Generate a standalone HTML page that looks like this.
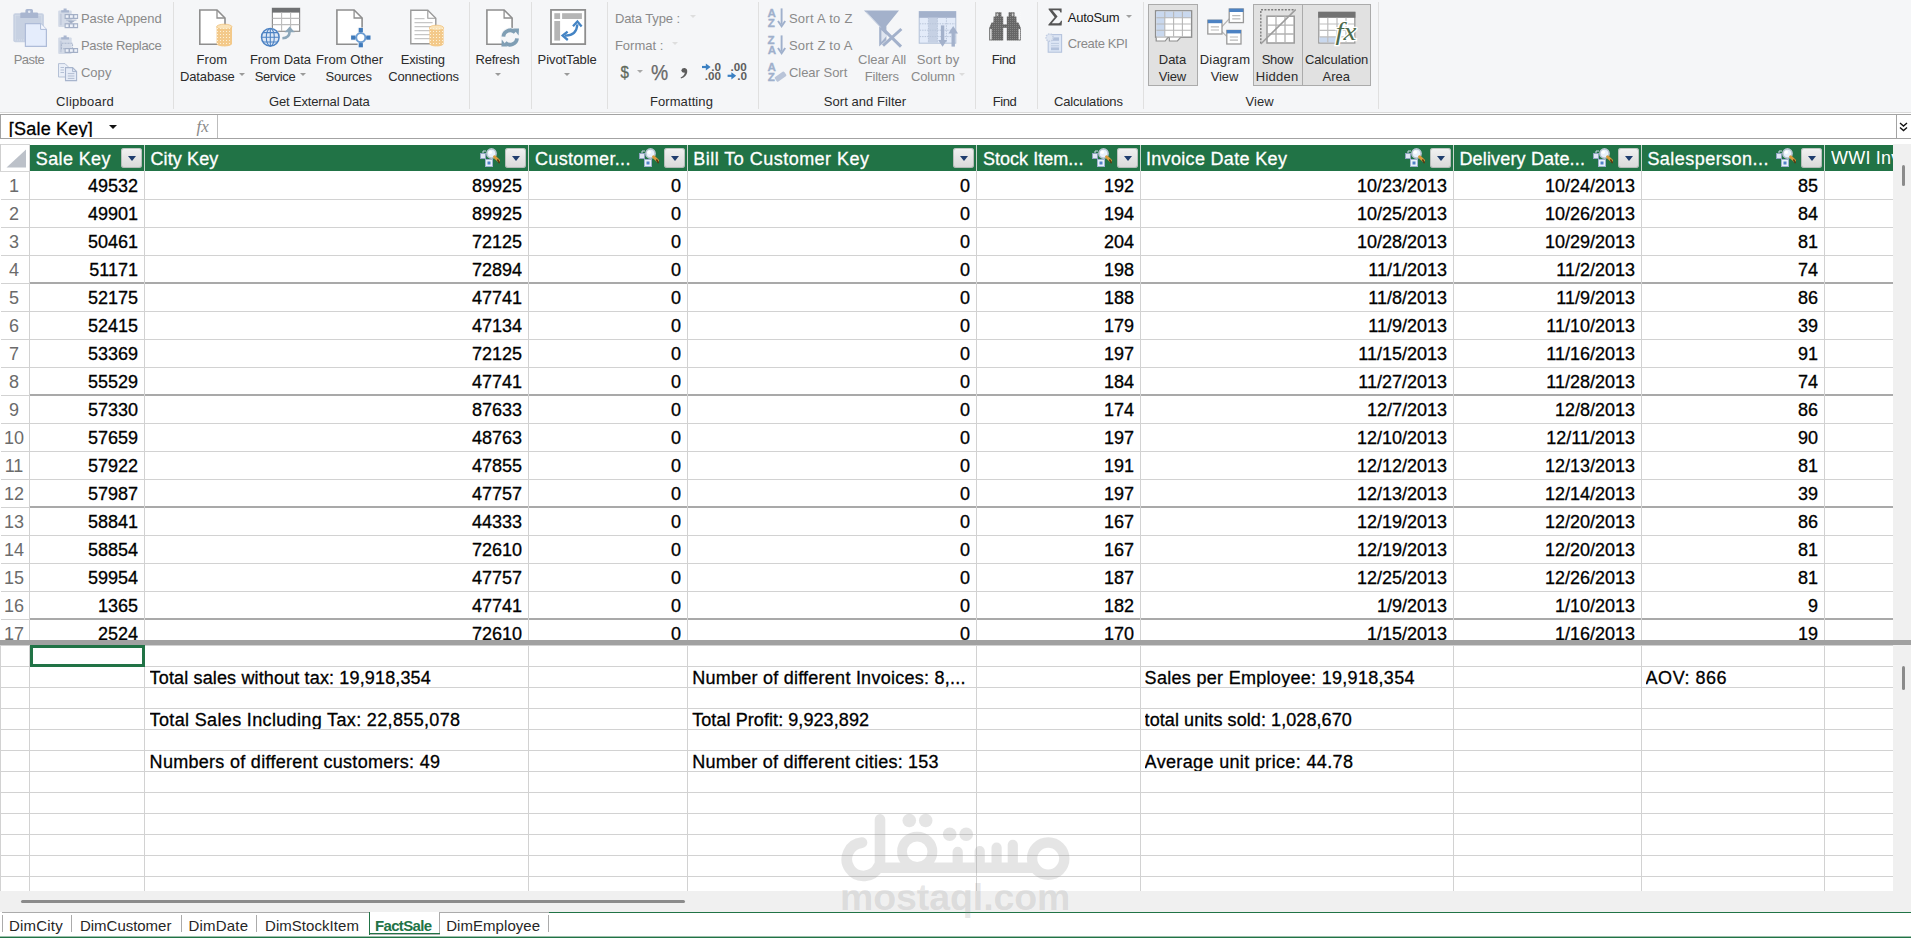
<!DOCTYPE html>
<html><head><meta charset="utf-8"><title>Power Pivot for Excel</title>
<style>
html,body{margin:0;padding:0}
body{width:1911px;height:938px;overflow:hidden;position:relative;background:#fff;font-family:'Liberation Sans', sans-serif}
.a{position:absolute}
.t{position:absolute;white-space:pre;display:block}
.sep{position:absolute;top:2px;width:1px;height:107px;background:#e0e0e0}
.vl{position:absolute;width:1px;background:#d2d2d2}
.hl{position:absolute;height:1px;background:#d2d2d2}
.num{position:absolute;-webkit-text-stroke:.3px #000;font-size:18px;line-height:28px;height:27px;overflow:hidden;text-align:right;color:#000;white-space:pre}
.rn{position:absolute;left:0;width:28px;font-size:18px;line-height:28px;height:27px;overflow:hidden;text-align:center;color:#6b6b6b}
.fb{position:absolute;width:21px;height:20px;border-radius:3px;background:linear-gradient(#f2f2f2,#e6e6e6 45%,#d9d9d9);box-shadow:inset 0 0 0 1px rgba(150,160,155,.55)}
.fb:after{content:"";position:absolute;left:6.5px;top:8px;border-left:4px solid transparent;border-right:4px solid transparent;border-top:5px solid #1f3d6e}
.arr{position:absolute;width:0;height:0;border-left:3px solid transparent;border-right:3px solid transparent;border-top:3px solid #a8a8a8}
.btn{position:absolute;top:4px;height:82px;background:#e1e1e1;border:1px solid #ababab;box-sizing:border-box}
</style></head><body>
<div class="a" style="left:0;top:0;width:1911px;height:112px;background:#f5f6f8"></div><div class="a" style="left:0;top:112px;width:1911px;height:1px;background:#dadada"></div><div class="sep" style="left:173px"></div><div class="sep" style="left:469px"></div><div class="sep" style="left:531px"></div><div class="sep" style="left:607px"></div><div class="sep" style="left:758px"></div><div class="sep" style="left:975px"></div><div class="sep" style="left:1037px"></div><div class="sep" style="left:1143px"></div><div class="sep" style="left:1378px"></div><div class="btn" style="left:1148px;width:50px"></div><div class="btn" style="left:1253px;width:50px"></div><div class="btn" style="left:1302px;width:69px"></div>
<div class="arr" style="left:239.2px;top:72.8px;border-top-color:#9a9a9a"></div><div class="arr" style="left:300.0px;top:72.8px;border-top-color:#9a9a9a"></div><div class="arr" style="left:495.2px;top:72.8px;border-top-color:#9a9a9a"></div><div class="arr" style="left:563.8px;top:72.8px;border-top-color:#9a9a9a"></div><div class="arr" style="left:689.5px;top:15.0px;border-top-color:#dedede"></div><div class="arr" style="left:672.0px;top:41.8px;border-top-color:#dedede"></div><div class="arr" style="left:637.0px;top:69.8px;border-top-color:#a8a8a8"></div><div class="arr" style="left:959.4px;top:72.8px;border-top-color:#dcdcdc"></div><div class="arr" style="left:1126.3px;top:15.0px;border-top-color:#a0a0a0"></div><svg class="a" style="left:0;top:0" width="1400" height="112" viewBox="0 0 1400 112">
<defs>
<pattern id="dots" width="3" height="3" patternUnits="userSpaceOnUse"><rect x="1" y="1" width="1" height="1" fill="#fdf1d8"/></pattern>
<pattern id="dotsb" width="2" height="2" patternUnits="userSpaceOnUse"><rect x="0" y="0" width="1" height="1" fill="#fff" opacity=".55"/></pattern>
</defs>
<rect x="13.3" y="13.3" width="30.6" height="29" rx="2" fill="#c7d1e2"/>
<rect x="15.5" y="15.5" width="26" height="24.5" fill="none" stroke="#d6deeb" stroke-width="1" stroke-dasharray="1 1"/>
<path d="M20.3 17.9 V13.6 Q20.3 12.4 21.6 12.4 H25.4 V10.6 Q25.4 9 27 9 H31.4 Q33 9 33 10.6 V12.4 H36.8 Q38.2 12.4 38.2 13.6 V17.9 Z" fill="#a9b6d0"/>
<circle cx="29.2" cy="11.8" r="1.3" fill="#e4eaf4"/>
<path d="M25.4 23.6 H40.6 L46.4 29.4 V46.4 H25.4 Z" fill="#e5edfc" stroke="#aebcd8" stroke-width="1.2"/>
<path d="M40.6 23.6 V29.4 H46.4" fill="#f4f7fe" stroke="#aebcd8" stroke-width="1"/>
<rect x="58.2" y="10.399999999999999" width="13.5" height="16.5" rx="1" fill="#d3dae7"/><path d="M61.2 12.6 V10.2 H63.6 V8.5 H66.60000000000001 V10.2 H69.0 V12.6 Z" fill="#a9b6cf"/><rect x="59.800000000000004" y="13.799999999999999" width="2" height="11.5" fill="#c2cbdc"/>
<rect x="64.6" y="14" width="13.499999999999998" height="5" fill="#a3afc6"/><rect x="65.69999999999999" y="15.2" width="2.8" height="2.6" fill="#eef2f9"/><rect x="69.99999999999999" y="15.2" width="2.8" height="2.6" fill="#eef2f9"/><rect x="74.29999999999998" y="15.2" width="2.8" height="2.6" fill="#eef2f9"/>
<path d="M67 20.4 H75.4 L71.2 23.4 Z" fill="#a3afc6"/><rect x="66" y="19.6" width="10.5" height="1" fill="#b4bfd2"/>
<rect x="64.6" y="23.2" width="13.499999999999998" height="5" fill="#a3afc6"/><rect x="65.69999999999999" y="24.4" width="2.8" height="2.6" fill="#eef2f9"/><rect x="69.99999999999999" y="24.4" width="2.8" height="2.6" fill="#eef2f9"/><rect x="74.29999999999998" y="24.4" width="2.8" height="2.6" fill="#eef2f9"/>
<rect x="58.2" y="37.400000000000006" width="13.5" height="16.5" rx="1" fill="#d3dae7"/><path d="M61.2 39.6 V37.2 H63.6 V35.5 H66.60000000000001 V37.2 H69.0 V39.6 Z" fill="#a9b6cf"/><rect x="59.800000000000004" y="40.800000000000004" width="2" height="11.5" fill="#c2cbdc"/>
<rect x="61.5" y="43.2" width="11" height="5.5" fill="none" stroke="#aab6cc" stroke-width="1.1" stroke-dasharray="2 1"/>
<rect x="64.6" y="48" width="13.499999999999998" height="5" fill="#a3afc6"/><rect x="65.69999999999999" y="49.2" width="2.8" height="2.6" fill="#eef2f9"/><rect x="69.99999999999999" y="49.2" width="2.8" height="2.6" fill="#eef2f9"/><rect x="74.29999999999998" y="49.2" width="2.8" height="2.6" fill="#eef2f9"/>
<path d="M58.5 63.6 H65 L68 66.6 V77 H58.5 Z" fill="#eaeff8" stroke="#b5c1d6" stroke-width="1"/>
<path d="M60.5 67.5 H64 M60.5 70 H64 M60.5 72.5 H64" stroke="#b5c1d6" stroke-width="1"/>
<path d="M65.5 67.6 H72.6 L76.6 71.6 V80.6 H65.5 Z" fill="#e6ecf7" stroke="#a8b5cd" stroke-width="1.1"/>
<path d="M72.6 67.6 V71.6 H76.6" fill="none" stroke="#a8b5cd" stroke-width="1"/>
<path d="M67.8 73.6 H74.4 M67.8 76 H74.4 M67.8 78.4 H74.4" stroke="#b2bdd2" stroke-width="1"/>
<path d="M199.8 10 H217.0 L225.0 18 V44.2 H199.8 Z" fill="#fff" stroke="#8e8e8e" stroke-width="1.6" stroke-linejoin="miter"/><path d="M217.0 10 V18 H225.0" fill="none" stroke="#8e8e8e" stroke-width="1.2800000000000002"/>
<path d="M216.6 26.8 V43.8 A7.7 2.6 0 0 0 232.0 43.8 V26.8 Z" fill="#f3c98a"/><ellipse cx="224.29999999999998" cy="26.8" rx="7.7" ry="2.6" fill="#fae3b9" stroke="#f0c27c" stroke-width=".8"/><path d="M216.6 26.8 V43.8 A7.7 2.6 0 0 0 232.0 43.8 V26.8" fill="url(#dots)"/>
<rect x="272.4" y="8.3" width="27.2" height="23" fill="#fff" stroke="#8e8e8e" stroke-width="1.2"/>
<rect x="272" y="8" width="28" height="4.6" fill="#6f7173"/>
<path d="M272.6 18.4 H299.4 M272.6 24.6 H299.4 M281.6 12.6 V31 M290.6 12.6 V31" stroke="#bcbcbc" stroke-width="1.1" fill="none"/>
<circle cx="270.3" cy="37.3" r="9.8" fill="#f5f6f8"/>
<circle cx="270.3" cy="37.3" r="8.8" fill="#dbe7f6" stroke="#4c82c3" stroke-width="1.5"/>
<ellipse cx="270.3" cy="37.3" rx="4" ry="8.8" fill="none" stroke="#4c82c3" stroke-width="1.1"/>
<path d="M261.6 37.3 H279 M263 32.6 H277.6 M263 42 H277.6 M270.3 28.5 V46.1" stroke="#4c82c3" stroke-width="1.1" fill="none"/>
<path d="M282.4 38.2 Q289.6 38 289.6 31.5" fill="none" stroke="#8ba6b9" stroke-width="2.6"/>
<path d="M284.6 32.2 L289.7 26.6 L294.8 32.2 Z" fill="#8ba6b9"/>
<path d="M336.9 10 H354.09999999999997 L362.09999999999997 18 V44.2 H336.9 Z" fill="#fff" stroke="#8e8e8e" stroke-width="1.6" stroke-linejoin="miter"/><path d="M354.09999999999997 10 V18 H362.09999999999997" fill="none" stroke="#8e8e8e" stroke-width="1.2800000000000002"/>
<path d="M357.6 27.6 H364 V34.4 H371 V40.8 H364 V47.8 H357.6 V40.8 H350.6 V34.4 H357.6 Z" fill="#f5f6f8"/>
<circle cx="360.8" cy="37.6" r="4.6" fill="#fff" stroke="#6c9dd2" stroke-width="2"/>
<path d="M360.8 29.5 V33 M360.8 42.2 V45.8 M352.6 37.6 H356.2 M365.4 37.6 H369" stroke="#6c9dd2" stroke-width="1.6"/>
<rect x="358.7" y="27.9" width="4.2" height="4.2" fill="#3f7abb"/>
<rect x="358.7" y="43.1" width="4.2" height="4.2" fill="#3f7abb"/>
<rect x="351.09999999999997" y="35.5" width="4.2" height="4.2" fill="#3f7abb"/>
<rect x="366.29999999999995" y="35.5" width="4.2" height="4.2" fill="#3f7abb"/>
<path d="M410.8 10.2 H427.8 L435.8 18.2 V43.8 H410.8 Z" fill="#fff" stroke="#9a9a9a" stroke-width="1.4" stroke-linejoin="miter"/><path d="M427.8 10.2 V18.2 H435.8" fill="none" stroke="#9a9a9a" stroke-width="1.1199999999999999"/>
<path d="M414.5 18.6 H424.5 M414.5 22.6 H432.6 M414.5 26.6 H432.6 M414.5 30.6 H430 M414.5 34.6 H430 M414.5 38.6 H430" stroke="#c6c6c6" stroke-width="1.1"/>
<path d="M429.4 27.8 V43.8 A7.1 2.6 0 0 0 443.59999999999997 43.8 V27.8 Z" fill="#f3c98a"/><ellipse cx="436.5" cy="27.8" rx="7.1" ry="2.6" fill="#fae3b9" stroke="#f0c27c" stroke-width=".8"/><path d="M429.4 27.8 V43.8 A7.1 2.6 0 0 0 443.59999999999997 43.8 V27.8" fill="url(#dots)"/>
<path d="M486.9 10 H504.1 L512.1 18 V44.2 H486.9 Z" fill="#fff" stroke="#8e8e8e" stroke-width="1.6" stroke-linejoin="miter"/><path d="M504.1 10 V18 H512.1" fill="none" stroke="#8e8e8e" stroke-width="1.2800000000000002"/>
<circle cx="510.2" cy="37.4" r="10" fill="#f5f6f8"/>
<path d="M503.4 36.6 A6.9 6.9 0 0 1 515.2 32.4" fill="none" stroke="#7f9eb4" stroke-width="3.8"/>
<path d="M513.2 28.6 L519 28.4 L518.6 35.4 Z" fill="#7f9eb4"/>
<path d="M517 38.4 A6.9 6.9 0 0 1 505.2 42.6" fill="none" stroke="#7f9eb4" stroke-width="3.8"/>
<path d="M507.2 46.4 L501.4 46.6 L501.8 39.6 Z" fill="#7f9eb4"/>
<rect x="551" y="9.9" width="34.2" height="34.2" fill="#fff" stroke="#8e8e8e" stroke-width="1.8"/>
<rect x="554.3" y="13.2" width="5.8" height="5.8" fill="#b5b5b5"/><rect x="562.1" y="13.2" width="19.8" height="5.8" fill="#b5b5b5"/><rect x="554.3" y="21" width="5.8" height="19.6" fill="#b5b5b5"/>
<path d="M565 35.6 Q576.4 36 577.4 24.4" fill="none" stroke="#4484c4" stroke-width="2.3"/>
<path d="M573 26.2 L577.4 21.4 L581.6 26.4" fill="none" stroke="#4484c4" stroke-width="2.3"/>
<path d="M567.6 31.6 L562.6 35.6 L567.8 40" fill="none" stroke="#4484c4" stroke-width="2.3"/>
<text x="620.6" y="78" font-size="16.5" fill="#5f6a5c" stroke="#5f6a5c" stroke-width=".3" textLength="8.4" lengthAdjust="spacingAndGlyphs">$</text>
<text x="651" y="79.8" font-size="21.5" fill="#686868" stroke="#686868" stroke-width=".25" textLength="17.2" lengthAdjust="spacingAndGlyphs">%</text>
<path d="M681.2 70.4 Q682 67.8 684.6 68 Q687.6 68.6 687.2 72.2 Q686.6 76.6 681 78.6 L680.6 77.6 Q684.6 75.6 684.8 72.6 Q682 73 681.2 70.4 Z" fill="#5d5d5d"/>
<text x="711.2" y="70.6" font-size="11.5" font-weight="bold" fill="#5d5d5d" textLength="9.8" lengthAdjust="spacingAndGlyphs">.0</text>
<text x="704.8" y="80.2" font-size="11.5" font-weight="bold" fill="#5d5d5d" textLength="16.2" lengthAdjust="spacingAndGlyphs">.00</text>
<path d="M702 67 H706.8" stroke="#3b80c2" stroke-width="2.2"/><path d="M705.8 63.4 L710.6 67 L705.8 70.6 Z" fill="#3b80c2"/>
<text x="730.6" y="70.6" font-size="11.5" font-weight="bold" fill="#5d5d5d" textLength="16.2" lengthAdjust="spacingAndGlyphs">.00</text>
<text x="737.2" y="80.2" font-size="11.5" font-weight="bold" fill="#5d5d5d" textLength="9.8" lengthAdjust="spacingAndGlyphs">.0</text>
<path d="M727.6 75.8 H732.4" stroke="#3b80c2" stroke-width="2.2"/><path d="M731.4 72.2 L736.2 75.8 L731.4 79.39999999999999 Z" fill="#3b80c2"/>
<text x="767.6" y="16.799999999999997" font-size="11.6" font-weight="bold" fill="#9fb0cc" stroke="#9fb0cc" stroke-width=".3">A</text><text x="767.8000000000001" y="26.8" font-size="11.6" font-weight="bold" fill="#9fb0cc" stroke="#9fb0cc" stroke-width=".3">Z</text>
<path d="M781.6 8.4 V24.4" stroke="#9fb0cc" stroke-width="1.9"/><path d="M778.0 21.0 L781.6 26.4 L785.2 21.0" fill="none" stroke="#9fb0cc" stroke-width="1.9"/>
<text x="767.6" y="43.800000000000004" font-size="11.6" font-weight="bold" fill="#9fb0cc" stroke="#9fb0cc" stroke-width=".3">Z</text><text x="767.8000000000001" y="53.800000000000004" font-size="11.6" font-weight="bold" fill="#9fb0cc" stroke="#9fb0cc" stroke-width=".3">A</text>
<path d="M781.6 35.4 V51.4" stroke="#9fb0cc" stroke-width="1.9"/><path d="M778.0 48.0 L781.6 53.4 L785.2 48.0" fill="none" stroke="#9fb0cc" stroke-width="1.9"/>
<text x="767.6" y="71.0" font-size="11.6" font-weight="bold" fill="#9fb0cc" stroke="#9fb0cc" stroke-width=".3">A</text><text x="767.8000000000001" y="81.0" font-size="11.6" font-weight="bold" fill="#9fb0cc" stroke="#9fb0cc" stroke-width=".3">Z</text>
<rect x="0" y="0" width="11.5" height="5.6" rx="1.2" transform="translate(774.2 77.6) rotate(-35)" fill="#b9c4d8"/>
<path d="M864 10.4 H899 L886.4 26 V40 L879.2 46.6 V26 Z" fill="#a3b1cb"/>
<path d="M881.4 30 V42 L887 35.4 Z" fill="#dfe5f0"/>
<path d="M866 11.6 L880.6 27.4" stroke="#d0d8e6" stroke-width="1"/>
<path d="M883.4 29.4 L901 46.6 M901.4 29 L883 45.6" stroke="#a3b1cb" stroke-width="3"/>
<rect x="919.2" y="11.6" width="36.6" height="31.6" fill="#e3ebf9" stroke="#b3c0d8" stroke-width="1"/>
<rect x="919" y="11.4" width="37" height="6.4" fill="#a3b1cb"/>
<rect x="928.4" y="17.8" width="9" height="25" fill="#c6d1e4"/>
<path d="M919.6 23.8 H955.4 M919.6 30.2 H955.4 M919.6 36.6 H955.4 M928.4 17.8 V43 M937.4 17.8 V43 M946.4 17.8 V43" stroke="#b9c5da" stroke-width="1" stroke-dasharray="1.5 1"/>
<path d="M942.6 25.4 V42" stroke="#a3b1cb" stroke-width="3.4"/><path d="M938.2 40 L942.6 46.8 L947 40 Z" fill="#a3b1cb"/>
<path d="M953.2 46.6 V31" stroke="#a3b1cb" stroke-width="3.4"/><path d="M948.4 33.4 L953.2 26 L958 33.4 Z" fill="#a3b1cb"/>
<path d="M989.2 40.6 V28 L991.6 22.6 L993.4 22.6 L993.6 16.6 L995.4 16.6 V12.2 H1001.4 V16.6 H1003.2 V40.6 Z" fill="#666666"/>
<path d="M1020.8 40.6 V28 L1018.4 22.6 L1016.6 22.6 L1016.4 16.6 L1014.6 16.6 V12.2 H1008.6 V16.6 H1006.8 V40.6 Z" fill="#666666"/>
<rect x="1003" y="24.4" width="4" height="3.4" fill="#666666"/>
<rect x="990.2" y="29" width="1.4" height="10.6" fill="#e9e9e9"/><rect x="1018.6" y="29" width="1.4" height="10.6" fill="#e9e9e9"/>
<rect x="996.6" y="13.4" width="1.6" height="2.6" fill="#c9c9c9"/><rect x="1011.8" y="13.4" width="1.6" height="2.6" fill="#c9c9c9"/>
<rect x="989.2" y="12" width="32" height="29" fill="url(#dotsb)" opacity=".35"/>
<path d="M1048.6 8.4 H1061.6 V12.4 H1060.4 Q1060 10.2 1058.2 10.2 H1052.4 L1057.6 16.6 L1051.8 23.2 H1058.6 Q1060.4 23.2 1061 20.8 H1062 L1061.6 25.6 H1048.4 V24.6 L1054.6 17.2 L1048.6 9.6 Z" fill="#555"/>
<rect x="1048.2" y="34.6" width="13.4" height="17.6" fill="#dde6f5" stroke="#b5c3dd" stroke-width="1.1"/>
<rect x="1051" y="37.4" width="8" height="3.4" fill="#b3c2dc"/><path d="M1051 43.4 H1059 M1051 45.8 H1059" stroke="#bccae0" stroke-width="1"/><rect x="1051" y="47.4" width="8" height="2.8" fill="#b3c2dc"/>
<circle cx="1049.6" cy="37.6" r="3.6" fill="#dfe6f2" stroke="#c3cee2" stroke-width="1.6" stroke-dasharray="1.4 1.1"/>
<rect x="1155.6" y="10.8" width="36" height="26.4" fill="#fff" stroke="#8e8e8e" stroke-width="1.4"/>
<rect x="1156.4" y="11.6" width="34.4" height="6.2" fill="#c9d8ee"/><rect x="1156.4" y="11.6" width="8.4" height="24.8" fill="#c9d8ee"/>
<path d="M1156.4 17.8 H1190.8 M1156.4 24 H1190.8 M1156.4 30.2 H1190.8 M1164.8 11.6 V36.4 M1173.6 11.6 V36.4 M1182.4 11.6 V36.4" stroke="#b7b7b7" stroke-width="1.1"/>
<path d="M1156.2 37.6 V41 H1165.2 L1167.8 37.6 M1169.4 37.6 V41 H1177.4 L1180.4 37.6" fill="#fff" stroke="#8e8e8e" stroke-width="1.2"/>
<path d="M1221.6 27 L1229.4 18.6 M1221.6 31.4 L1227 36.6" stroke="#b5b5b5" stroke-width="1.2"/>
<rect x="1229.2" y="9" width="14.2" height="13.6" fill="#fff" stroke="#9a9a9a" stroke-width="1.3"/><rect x="1229.2" y="8.6" width="14.2" height="3.4" fill="#4c82c3"/><path d="M1232.2 15.6 H1240.4 M1232.2 18.8 H1240.4" stroke="#b9b9b9" stroke-width="1.2"/>
<rect x="1207.8" y="20.2" width="14.2" height="13.8" fill="#fff" stroke="#9a9a9a" stroke-width="1.3"/><rect x="1207.8" y="19.8" width="14.2" height="3.4" fill="#4c82c3"/><path d="M1210.8 26.799999999999997 H1219.0 M1210.8 30.0 H1219.0" stroke="#b9b9b9" stroke-width="1.2"/>
<rect x="1226.8" y="30.4" width="14.2" height="13.6" fill="#fff" stroke="#9a9a9a" stroke-width="1.3"/><rect x="1226.8" y="30.0" width="14.2" height="3.4" fill="#4c82c3"/><path d="M1229.8 37.0 H1238.0 M1229.8 40.2 H1238.0" stroke="#b9b9b9" stroke-width="1.2"/>
<path d="M1260.8 43.6 V9.8 H1295.4" fill="none" stroke="#7c7c7c" stroke-width="1.4" stroke-dasharray="2 1.4"/>
<rect x="1267" y="16.2" width="27.2" height="26.8" fill="#fff" stroke="#9a9a9a" stroke-width="1.5"/>
<path d="M1267 25.2 H1294.2 M1267 34 H1294.2 M1276 16.2 V43 M1285 16.2 V43" stroke="#b3b3b3" stroke-width="1.3"/>
<path d="M1260.8 44 L1295.6 9.6" stroke="#9d9d9d" stroke-width="1.5"/>
<rect x="1318.8" y="12.4" width="36" height="30.6" fill="#fff" stroke="#9a9a9a" stroke-width="1.3"/>
<rect x="1318.2" y="11.8" width="37.2" height="6" fill="#727272"/>
<rect x="1319.4" y="37" width="17.6" height="5.4" fill="#c9d8ee"/>
<path d="M1319.4 24 H1354.2 M1319.4 30.4 H1354.2 M1319.4 36.8 H1354.2 M1327.8 17.8 V42.4 M1337 17.8 V42.4 M1346 17.8 V42.4" stroke="#bdbdbd" stroke-width="1.2"/>
<text x="1335.5" y="40" font-family="Liberation Serif, serif" font-style="italic" font-size="26" fill="#fff" stroke="#fff" stroke-width="2.6" textLength="21" lengthAdjust="spacingAndGlyphs">fx</text>
<text x="1335.5" y="40" font-family="Liberation Serif, serif" font-style="italic" font-size="26" fill="#4c6b4c" textLength="21" lengthAdjust="spacingAndGlyphs">fx</text>
</svg>
<div class="a" style="left:0;top:114px;width:1910px;height:23px;border:1px solid #a3a3a3;border-right:0;background:#fff"></div>
<div class="a" style="left:217px;top:115px;width:1px;height:23px;background:#bdbdbd"></div>
<div class="a" style="left:1896px;top:115px;width:1px;height:23px;background:#a3a3a3"></div>
<div class="a" style="left:109px;top:125px;width:0;height:0;border-left:4px solid transparent;border-right:4px solid transparent;border-top:4px solid #111"></div>
<div class="a" style="left:196.5px;top:114.5px;width:18px;height:24px;font-family:'Liberation Serif',serif;font-style:italic;font-size:17px;line-height:24px;color:#8a8a8a;letter-spacing:0px">fx</div>
<svg class="a" style="left:1899px;top:122px" width="9" height="10" viewBox="0 0 9 10"><path d="M1 1 L4.5 4 L8 1 M1 5.5 L4.5 8.5 L8 5.5" fill="none" stroke="#111" stroke-width="1.4"/></svg>

<div class="a" style="left:30px;top:145px;width:1863px;height:26px;background:#217346"></div>
<svg class="a" style="left:6px;top:149px" width="21" height="19" viewBox="0 0 21 19"><path d="M20 0.5 V18.5 H0.5 Z" fill="#bcc1c9"/></svg>
<div class="a" style="left:0;top:144px;width:30px;height:1px;background:#d6d6d6"></div><div class="a" style="left:0;top:144px;width:1px;height:28px;background:#cfcfcf"></div><div class="a" style="left:0;top:171px;width:30px;height:1px;background:#d6d6d6"></div><div class="a" style="left:29px;top:144px;width:1px;height:28px;background:#d6d6d6"></div>
<div class="a" style="left:144px;top:145px;width:1px;height:26px;background:#c9d6ce"></div>
<div class="a" style="left:528px;top:145px;width:1px;height:26px;background:#c9d6ce"></div>
<div class="a" style="left:687px;top:145px;width:1px;height:26px;background:#c9d6ce"></div>
<div class="a" style="left:976px;top:145px;width:1px;height:26px;background:#c9d6ce"></div>
<div class="a" style="left:1140px;top:145px;width:1px;height:26px;background:#c9d6ce"></div>
<div class="a" style="left:1453px;top:145px;width:1px;height:26px;background:#c9d6ce"></div>
<div class="a" style="left:1641px;top:145px;width:1px;height:26px;background:#c9d6ce"></div>
<div class="a" style="left:1824px;top:145px;width:1px;height:26px;background:#c9d6ce"></div>
<div class="fb" style="left:121px;top:147.5px"></div>
<div class="fb" style="left:505px;top:147.5px"></div>
<div class="fb" style="left:664px;top:147.5px"></div>
<div class="fb" style="left:953px;top:147.5px"></div>
<div class="fb" style="left:1117px;top:147.5px"></div>
<div class="fb" style="left:1430px;top:147.5px"></div>
<div class="fb" style="left:1618px;top:147.5px"></div>
<div class="fb" style="left:1801px;top:147.5px"></div>
<div class="fb" style="left:1873px;top:147.5px;display:none"></div>
<svg class="a" style="left:480px;top:148px" width="21" height="19" viewBox="0 0 21 19">
<rect x="0.5" y="5.5" width="5" height="5" fill="#dfe7f2" stroke="#8fa3c0"/>
<rect x="5.5" y="11.5" width="7" height="7" fill="#e9f0fa" stroke="#9db1cf"/>
<rect x="7.5" y="13.5" width="3" height="3" fill="#4f81c7"/>
<path d="M3 5 V3 H6" fill="none" stroke="#cfd8e6"/>
<circle cx="11.5" cy="5.5" r="4.6" fill="#e8f1fb" stroke="#b9c4d2" stroke-width="1.6"/>
<circle cx="10.3" cy="4.3" r="1.8" fill="#fff"/>
<path d="M14.6 8.8 L18.5 12.5" stroke="#d89a3a" stroke-width="3" stroke-linecap="round"/>
<path d="M17.8 12 L19.2 14.6" stroke="#5a3a12" stroke-width="1.6" stroke-linecap="round"/>
</svg>
<svg class="a" style="left:639px;top:148px" width="21" height="19" viewBox="0 0 21 19">
<rect x="0.5" y="5.5" width="5" height="5" fill="#dfe7f2" stroke="#8fa3c0"/>
<rect x="5.5" y="11.5" width="7" height="7" fill="#e9f0fa" stroke="#9db1cf"/>
<rect x="7.5" y="13.5" width="3" height="3" fill="#4f81c7"/>
<path d="M3 5 V3 H6" fill="none" stroke="#cfd8e6"/>
<circle cx="11.5" cy="5.5" r="4.6" fill="#e8f1fb" stroke="#b9c4d2" stroke-width="1.6"/>
<circle cx="10.3" cy="4.3" r="1.8" fill="#fff"/>
<path d="M14.6 8.8 L18.5 12.5" stroke="#d89a3a" stroke-width="3" stroke-linecap="round"/>
<path d="M17.8 12 L19.2 14.6" stroke="#5a3a12" stroke-width="1.6" stroke-linecap="round"/>
</svg>
<svg class="a" style="left:1092px;top:148px" width="21" height="19" viewBox="0 0 21 19">
<rect x="0.5" y="5.5" width="5" height="5" fill="#dfe7f2" stroke="#8fa3c0"/>
<rect x="5.5" y="11.5" width="7" height="7" fill="#e9f0fa" stroke="#9db1cf"/>
<rect x="7.5" y="13.5" width="3" height="3" fill="#4f81c7"/>
<path d="M3 5 V3 H6" fill="none" stroke="#cfd8e6"/>
<circle cx="11.5" cy="5.5" r="4.6" fill="#e8f1fb" stroke="#b9c4d2" stroke-width="1.6"/>
<circle cx="10.3" cy="4.3" r="1.8" fill="#fff"/>
<path d="M14.6 8.8 L18.5 12.5" stroke="#d89a3a" stroke-width="3" stroke-linecap="round"/>
<path d="M17.8 12 L19.2 14.6" stroke="#5a3a12" stroke-width="1.6" stroke-linecap="round"/>
</svg>
<svg class="a" style="left:1405px;top:148px" width="21" height="19" viewBox="0 0 21 19">
<rect x="0.5" y="5.5" width="5" height="5" fill="#dfe7f2" stroke="#8fa3c0"/>
<rect x="5.5" y="11.5" width="7" height="7" fill="#e9f0fa" stroke="#9db1cf"/>
<rect x="7.5" y="13.5" width="3" height="3" fill="#4f81c7"/>
<path d="M3 5 V3 H6" fill="none" stroke="#cfd8e6"/>
<circle cx="11.5" cy="5.5" r="4.6" fill="#e8f1fb" stroke="#b9c4d2" stroke-width="1.6"/>
<circle cx="10.3" cy="4.3" r="1.8" fill="#fff"/>
<path d="M14.6 8.8 L18.5 12.5" stroke="#d89a3a" stroke-width="3" stroke-linecap="round"/>
<path d="M17.8 12 L19.2 14.6" stroke="#5a3a12" stroke-width="1.6" stroke-linecap="round"/>
</svg>
<svg class="a" style="left:1593px;top:148px" width="21" height="19" viewBox="0 0 21 19">
<rect x="0.5" y="5.5" width="5" height="5" fill="#dfe7f2" stroke="#8fa3c0"/>
<rect x="5.5" y="11.5" width="7" height="7" fill="#e9f0fa" stroke="#9db1cf"/>
<rect x="7.5" y="13.5" width="3" height="3" fill="#4f81c7"/>
<path d="M3 5 V3 H6" fill="none" stroke="#cfd8e6"/>
<circle cx="11.5" cy="5.5" r="4.6" fill="#e8f1fb" stroke="#b9c4d2" stroke-width="1.6"/>
<circle cx="10.3" cy="4.3" r="1.8" fill="#fff"/>
<path d="M14.6 8.8 L18.5 12.5" stroke="#d89a3a" stroke-width="3" stroke-linecap="round"/>
<path d="M17.8 12 L19.2 14.6" stroke="#5a3a12" stroke-width="1.6" stroke-linecap="round"/>
</svg>
<svg class="a" style="left:1776px;top:148px" width="21" height="19" viewBox="0 0 21 19">
<rect x="0.5" y="5.5" width="5" height="5" fill="#dfe7f2" stroke="#8fa3c0"/>
<rect x="5.5" y="11.5" width="7" height="7" fill="#e9f0fa" stroke="#9db1cf"/>
<rect x="7.5" y="13.5" width="3" height="3" fill="#4f81c7"/>
<path d="M3 5 V3 H6" fill="none" stroke="#cfd8e6"/>
<circle cx="11.5" cy="5.5" r="4.6" fill="#e8f1fb" stroke="#b9c4d2" stroke-width="1.6"/>
<circle cx="10.3" cy="4.3" r="1.8" fill="#fff"/>
<path d="M14.6 8.8 L18.5 12.5" stroke="#d89a3a" stroke-width="3" stroke-linecap="round"/>
<path d="M17.8 12 L19.2 14.6" stroke="#5a3a12" stroke-width="1.6" stroke-linecap="round"/>
</svg>
<span class="t" style="left:1831px;top:147.3px;font-size:18px;line-height:22px;color:#fff;width:62px;overflow:hidden;letter-spacing:0.2px">WWI Inv</span>
<div class="a" style="left:0;top:171px;width:1893px;height:469px;overflow:hidden">
<div class="rn" style="top:1px">1</div>
<div class="num" style="left:30px;top:1px;width:108px">49532</div>
<div class="num" style="left:145px;top:1px;width:377px">89925</div>
<div class="num" style="left:529px;top:1px;width:152px">0</div>
<div class="num" style="left:688px;top:1px;width:282px">0</div>
<div class="num" style="left:977px;top:1px;width:157px">192</div>
<div class="num" style="left:1141px;top:1px;width:306px">10/23/2013</div>
<div class="num" style="left:1454px;top:1px;width:181px">10/24/2013</div>
<div class="num" style="left:1642px;top:1px;width:176px">85</div>
<div class="hl" style="left:1px;top:28px;width:1892px"></div>
<div class="rn" style="top:29px">2</div>
<div class="num" style="left:30px;top:29px;width:108px">49901</div>
<div class="num" style="left:145px;top:29px;width:377px">89925</div>
<div class="num" style="left:529px;top:29px;width:152px">0</div>
<div class="num" style="left:688px;top:29px;width:282px">0</div>
<div class="num" style="left:977px;top:29px;width:157px">194</div>
<div class="num" style="left:1141px;top:29px;width:306px">10/25/2013</div>
<div class="num" style="left:1454px;top:29px;width:181px">10/26/2013</div>
<div class="num" style="left:1642px;top:29px;width:176px">84</div>
<div class="hl" style="left:1px;top:56px;width:1892px"></div>
<div class="rn" style="top:57px">3</div>
<div class="num" style="left:30px;top:57px;width:108px">50461</div>
<div class="num" style="left:145px;top:57px;width:377px">72125</div>
<div class="num" style="left:529px;top:57px;width:152px">0</div>
<div class="num" style="left:688px;top:57px;width:282px">0</div>
<div class="num" style="left:977px;top:57px;width:157px">204</div>
<div class="num" style="left:1141px;top:57px;width:306px">10/28/2013</div>
<div class="num" style="left:1454px;top:57px;width:181px">10/29/2013</div>
<div class="num" style="left:1642px;top:57px;width:176px">81</div>
<div class="hl" style="left:1px;top:84px;width:1892px"></div>
<div class="rn" style="top:85px">4</div>
<div class="num" style="left:30px;top:85px;width:108px">51171</div>
<div class="num" style="left:145px;top:85px;width:377px">72894</div>
<div class="num" style="left:529px;top:85px;width:152px">0</div>
<div class="num" style="left:688px;top:85px;width:282px">0</div>
<div class="num" style="left:977px;top:85px;width:157px">198</div>
<div class="num" style="left:1141px;top:85px;width:306px">11/1/2013</div>
<div class="num" style="left:1454px;top:85px;width:181px">11/2/2013</div>
<div class="num" style="left:1642px;top:85px;width:176px">74</div>
<div class="hl" style="left:1px;top:112px;width:28px"></div>
<div class="a" style="left:30px;top:111px;width:1863px;height:2px;background:#a9a9a9"></div>
<div class="rn" style="top:113px">5</div>
<div class="num" style="left:30px;top:113px;width:108px">52175</div>
<div class="num" style="left:145px;top:113px;width:377px">47741</div>
<div class="num" style="left:529px;top:113px;width:152px">0</div>
<div class="num" style="left:688px;top:113px;width:282px">0</div>
<div class="num" style="left:977px;top:113px;width:157px">188</div>
<div class="num" style="left:1141px;top:113px;width:306px">11/8/2013</div>
<div class="num" style="left:1454px;top:113px;width:181px">11/9/2013</div>
<div class="num" style="left:1642px;top:113px;width:176px">86</div>
<div class="hl" style="left:1px;top:140px;width:1892px"></div>
<div class="rn" style="top:141px">6</div>
<div class="num" style="left:30px;top:141px;width:108px">52415</div>
<div class="num" style="left:145px;top:141px;width:377px">47134</div>
<div class="num" style="left:529px;top:141px;width:152px">0</div>
<div class="num" style="left:688px;top:141px;width:282px">0</div>
<div class="num" style="left:977px;top:141px;width:157px">179</div>
<div class="num" style="left:1141px;top:141px;width:306px">11/9/2013</div>
<div class="num" style="left:1454px;top:141px;width:181px">11/10/2013</div>
<div class="num" style="left:1642px;top:141px;width:176px">39</div>
<div class="hl" style="left:1px;top:168px;width:1892px"></div>
<div class="rn" style="top:169px">7</div>
<div class="num" style="left:30px;top:169px;width:108px">53369</div>
<div class="num" style="left:145px;top:169px;width:377px">72125</div>
<div class="num" style="left:529px;top:169px;width:152px">0</div>
<div class="num" style="left:688px;top:169px;width:282px">0</div>
<div class="num" style="left:977px;top:169px;width:157px">197</div>
<div class="num" style="left:1141px;top:169px;width:306px">11/15/2013</div>
<div class="num" style="left:1454px;top:169px;width:181px">11/16/2013</div>
<div class="num" style="left:1642px;top:169px;width:176px">91</div>
<div class="hl" style="left:1px;top:196px;width:1892px"></div>
<div class="rn" style="top:197px">8</div>
<div class="num" style="left:30px;top:197px;width:108px">55529</div>
<div class="num" style="left:145px;top:197px;width:377px">47741</div>
<div class="num" style="left:529px;top:197px;width:152px">0</div>
<div class="num" style="left:688px;top:197px;width:282px">0</div>
<div class="num" style="left:977px;top:197px;width:157px">184</div>
<div class="num" style="left:1141px;top:197px;width:306px">11/27/2013</div>
<div class="num" style="left:1454px;top:197px;width:181px">11/28/2013</div>
<div class="num" style="left:1642px;top:197px;width:176px">74</div>
<div class="hl" style="left:1px;top:224px;width:28px"></div>
<div class="a" style="left:30px;top:223px;width:1863px;height:2px;background:#a9a9a9"></div>
<div class="rn" style="top:225px">9</div>
<div class="num" style="left:30px;top:225px;width:108px">57330</div>
<div class="num" style="left:145px;top:225px;width:377px">87633</div>
<div class="num" style="left:529px;top:225px;width:152px">0</div>
<div class="num" style="left:688px;top:225px;width:282px">0</div>
<div class="num" style="left:977px;top:225px;width:157px">174</div>
<div class="num" style="left:1141px;top:225px;width:306px">12/7/2013</div>
<div class="num" style="left:1454px;top:225px;width:181px">12/8/2013</div>
<div class="num" style="left:1642px;top:225px;width:176px">86</div>
<div class="hl" style="left:1px;top:252px;width:1892px"></div>
<div class="rn" style="top:253px">10</div>
<div class="num" style="left:30px;top:253px;width:108px">57659</div>
<div class="num" style="left:145px;top:253px;width:377px">48763</div>
<div class="num" style="left:529px;top:253px;width:152px">0</div>
<div class="num" style="left:688px;top:253px;width:282px">0</div>
<div class="num" style="left:977px;top:253px;width:157px">197</div>
<div class="num" style="left:1141px;top:253px;width:306px">12/10/2013</div>
<div class="num" style="left:1454px;top:253px;width:181px">12/11/2013</div>
<div class="num" style="left:1642px;top:253px;width:176px">90</div>
<div class="hl" style="left:1px;top:280px;width:1892px"></div>
<div class="rn" style="top:281px">11</div>
<div class="num" style="left:30px;top:281px;width:108px">57922</div>
<div class="num" style="left:145px;top:281px;width:377px">47855</div>
<div class="num" style="left:529px;top:281px;width:152px">0</div>
<div class="num" style="left:688px;top:281px;width:282px">0</div>
<div class="num" style="left:977px;top:281px;width:157px">191</div>
<div class="num" style="left:1141px;top:281px;width:306px">12/12/2013</div>
<div class="num" style="left:1454px;top:281px;width:181px">12/13/2013</div>
<div class="num" style="left:1642px;top:281px;width:176px">81</div>
<div class="hl" style="left:1px;top:308px;width:1892px"></div>
<div class="rn" style="top:309px">12</div>
<div class="num" style="left:30px;top:309px;width:108px">57987</div>
<div class="num" style="left:145px;top:309px;width:377px">47757</div>
<div class="num" style="left:529px;top:309px;width:152px">0</div>
<div class="num" style="left:688px;top:309px;width:282px">0</div>
<div class="num" style="left:977px;top:309px;width:157px">197</div>
<div class="num" style="left:1141px;top:309px;width:306px">12/13/2013</div>
<div class="num" style="left:1454px;top:309px;width:181px">12/14/2013</div>
<div class="num" style="left:1642px;top:309px;width:176px">39</div>
<div class="hl" style="left:1px;top:336px;width:28px"></div>
<div class="a" style="left:30px;top:335px;width:1863px;height:2px;background:#a9a9a9"></div>
<div class="rn" style="top:337px">13</div>
<div class="num" style="left:30px;top:337px;width:108px">58841</div>
<div class="num" style="left:145px;top:337px;width:377px">44333</div>
<div class="num" style="left:529px;top:337px;width:152px">0</div>
<div class="num" style="left:688px;top:337px;width:282px">0</div>
<div class="num" style="left:977px;top:337px;width:157px">167</div>
<div class="num" style="left:1141px;top:337px;width:306px">12/19/2013</div>
<div class="num" style="left:1454px;top:337px;width:181px">12/20/2013</div>
<div class="num" style="left:1642px;top:337px;width:176px">86</div>
<div class="hl" style="left:1px;top:364px;width:1892px"></div>
<div class="rn" style="top:365px">14</div>
<div class="num" style="left:30px;top:365px;width:108px">58854</div>
<div class="num" style="left:145px;top:365px;width:377px">72610</div>
<div class="num" style="left:529px;top:365px;width:152px">0</div>
<div class="num" style="left:688px;top:365px;width:282px">0</div>
<div class="num" style="left:977px;top:365px;width:157px">167</div>
<div class="num" style="left:1141px;top:365px;width:306px">12/19/2013</div>
<div class="num" style="left:1454px;top:365px;width:181px">12/20/2013</div>
<div class="num" style="left:1642px;top:365px;width:176px">81</div>
<div class="hl" style="left:1px;top:392px;width:1892px"></div>
<div class="rn" style="top:393px">15</div>
<div class="num" style="left:30px;top:393px;width:108px">59954</div>
<div class="num" style="left:145px;top:393px;width:377px">47757</div>
<div class="num" style="left:529px;top:393px;width:152px">0</div>
<div class="num" style="left:688px;top:393px;width:282px">0</div>
<div class="num" style="left:977px;top:393px;width:157px">187</div>
<div class="num" style="left:1141px;top:393px;width:306px">12/25/2013</div>
<div class="num" style="left:1454px;top:393px;width:181px">12/26/2013</div>
<div class="num" style="left:1642px;top:393px;width:176px">81</div>
<div class="hl" style="left:1px;top:420px;width:1892px"></div>
<div class="rn" style="top:421px">16</div>
<div class="num" style="left:30px;top:421px;width:108px">1365</div>
<div class="num" style="left:145px;top:421px;width:377px">47741</div>
<div class="num" style="left:529px;top:421px;width:152px">0</div>
<div class="num" style="left:688px;top:421px;width:282px">0</div>
<div class="num" style="left:977px;top:421px;width:157px">182</div>
<div class="num" style="left:1141px;top:421px;width:306px">1/9/2013</div>
<div class="num" style="left:1454px;top:421px;width:181px">1/10/2013</div>
<div class="num" style="left:1642px;top:421px;width:176px">9</div>
<div class="hl" style="left:1px;top:448px;width:28px"></div>
<div class="a" style="left:30px;top:447px;width:1863px;height:2px;background:#a9a9a9"></div>
<div class="rn" style="top:449px">17</div>
<div class="num" style="left:30px;top:449px;width:108px">2524</div>
<div class="num" style="left:145px;top:449px;width:377px">72610</div>
<div class="num" style="left:529px;top:449px;width:152px">0</div>
<div class="num" style="left:688px;top:449px;width:282px">0</div>
<div class="num" style="left:977px;top:449px;width:157px">170</div>
<div class="num" style="left:1141px;top:449px;width:306px">1/15/2013</div>
<div class="num" style="left:1454px;top:449px;width:181px">1/16/2013</div>
<div class="num" style="left:1642px;top:449px;width:176px">19</div>
<div class="hl" style="left:1px;top:476px;width:1892px"></div>
<div class="vl" style="left:29px;top:0;height:469px"></div>
<div class="vl" style="left:144px;top:0;height:469px"></div>
<div class="vl" style="left:528px;top:0;height:469px"></div>
<div class="vl" style="left:687px;top:0;height:469px"></div>
<div class="vl" style="left:976px;top:0;height:469px"></div>
<div class="vl" style="left:1140px;top:0;height:469px"></div>
<div class="vl" style="left:1453px;top:0;height:469px"></div>
<div class="vl" style="left:1641px;top:0;height:469px"></div>
<div class="vl" style="left:1824px;top:0;height:469px"></div>
</div>
<div class="a" style="left:0;top:640px;width:1911px;height:5px;background:#a1a1a1"></div>
<div class="a" style="left:0;top:645px;width:1893px;height:246px;overflow:hidden;background:#fff">
<div class="hl" style="left:0;top:0px;width:1893px"></div>
<div class="hl" style="left:0;top:21px;width:1893px"></div>
<div class="hl" style="left:0;top:42px;width:1893px"></div>
<div class="hl" style="left:0;top:63px;width:1893px"></div>
<div class="hl" style="left:0;top:84px;width:1893px"></div>
<div class="hl" style="left:0;top:105px;width:1893px"></div>
<div class="hl" style="left:0;top:126px;width:1893px"></div>
<div class="hl" style="left:0;top:147px;width:1893px"></div>
<div class="hl" style="left:0;top:168px;width:1893px"></div>
<div class="hl" style="left:0;top:189px;width:1893px"></div>
<div class="hl" style="left:0;top:210px;width:1893px"></div>
<div class="hl" style="left:0;top:231px;width:1893px"></div>
<div class="vl" style="left:0px;top:0;height:246px"></div>
<div class="vl" style="left:29px;top:0;height:246px"></div>
<div class="vl" style="left:144px;top:0;height:246px"></div>
<div class="vl" style="left:528px;top:0;height:246px"></div>
<div class="vl" style="left:687px;top:0;height:246px"></div>
<div class="vl" style="left:976px;top:0;height:246px"></div>
<div class="vl" style="left:1140px;top:0;height:246px"></div>
<div class="vl" style="left:1453px;top:0;height:246px"></div>
<div class="vl" style="left:1641px;top:0;height:246px"></div>
<div class="vl" style="left:1824px;top:0;height:246px"></div>
<div class="a" style="left:30px;top:0;width:109px;height:16px;border:3px solid #217346"></div>
</div>
<div class="a" style="left:1893px;top:144px;width:18px;height:496px;background:#f0f0f0"></div>
<div class="a" style="left:1893px;top:645px;width:18px;height:267px;background:#f0f0f0"></div>
<div class="a" style="left:0;top:891px;width:1911px;height:21px;background:#f0f0f0"></div>
<div class="a" style="left:1902px;top:165px;width:3px;height:21px;background:#8b8b8b;border-radius:2px"></div>
<div class="a" style="left:1902px;top:666px;width:3px;height:24px;background:#8b8b8b;border-radius:2px"></div>
<div class="a" style="left:21px;top:900px;width:664px;height:3px;background:#8b8b8b;border-radius:2px"></div>

<div class="a" style="left:0;top:912px;width:1911px;height:26px;background:#fff"></div>
<div class="a" style="left:2px;top:912px;width:547px;height:1px;background:#ababab"></div>
<div class="a" style="left:549px;top:912px;width:1362px;height:1px;background:#217346"></div>
<div class="a" style="left:370px;top:912px;width:69px;height:1px;background:#fff"></div>
<div class="a" style="left:2px;top:915px;width:1px;height:17px;background:#ababab"></div><div class="a" style="left:71px;top:915px;width:1px;height:17px;background:#ababab"></div><div class="a" style="left:181px;top:915px;width:1px;height:17px;background:#ababab"></div><div class="a" style="left:256px;top:915px;width:1px;height:17px;background:#ababab"></div><div class="a" style="left:548px;top:915px;width:1px;height:17px;background:#ababab"></div>
<div class="a" style="left:369px;top:912px;width:1px;height:23px;background:#217346"></div>
<div class="a" style="left:439px;top:912px;width:1px;height:23px;background:#ababab"></div>
<div class="a" style="left:369px;top:933px;width:71px;height:1px;background:#217346"></div><div class="a" style="left:370px;top:934px;width:70px;height:1px;background:#b4b4b4"></div>
<div class="a" style="left:0;top:936px;width:1911px;height:1px;background:#9cc0ab"></div><div class="a" style="left:0;top:937px;width:1911px;height:1px;background:#217346"></div>

<span class="t" style="left:13.7px;top:52.2px;font-size:13px;line-height:16px;color:#8a8a8a;letter-spacing:-0.538px">Paste</span>
<span class="t" style="left:80.9px;top:11.1px;font-size:13px;line-height:16px;color:#8a8a8a;letter-spacing:-0.006px">Paste Append</span>
<span class="t" style="left:80.9px;top:38.0px;font-size:13px;line-height:16px;color:#8a8a8a;letter-spacing:-0.305px">Paste Replace</span>
<span class="t" style="left:80.9px;top:65.4px;font-size:13px;line-height:16px;color:#8a8a8a;letter-spacing:0.047px">Copy</span>
<span class="t" style="left:56.1px;top:94.0px;font-size:13px;line-height:16px;color:#2b2b2b;letter-spacing:0.255px">Clipboard</span>
<span class="t" style="left:196.6px;top:52.2px;font-size:13px;line-height:16px;color:#2b2b2b;letter-spacing:0.052px">From</span>
<span class="t" style="left:179.9px;top:69.2px;font-size:13px;line-height:16px;color:#2b2b2b;letter-spacing:-0.108px">Database</span>
<span class="t" style="left:249.9px;top:52.2px;font-size:13px;line-height:16px;color:#2b2b2b;letter-spacing:-0.038px">From Data</span>
<span class="t" style="left:254.7px;top:69.2px;font-size:13px;line-height:16px;color:#2b2b2b;letter-spacing:-0.393px">Service</span>
<span class="t" style="left:316.0px;top:52.2px;font-size:13px;line-height:16px;color:#2b2b2b;letter-spacing:0.081px">From Other</span>
<span class="t" style="left:325.5px;top:69.2px;font-size:13px;line-height:16px;color:#2b2b2b;letter-spacing:-0.217px">Sources</span>
<span class="t" style="left:400.7px;top:52.2px;font-size:13px;line-height:16px;color:#2b2b2b;letter-spacing:-0.176px">Existing</span>
<span class="t" style="left:388.2px;top:69.2px;font-size:13px;line-height:16px;color:#2b2b2b;letter-spacing:-0.148px">Connections</span>
<span class="t" style="left:269.0px;top:94.0px;font-size:13px;line-height:16px;color:#2b2b2b;letter-spacing:-0.158px">Get External Data</span>
<span class="t" style="left:475.5px;top:52.2px;font-size:13px;line-height:16px;color:#2b2b2b;letter-spacing:-0.222px">Refresh</span>
<span class="t" style="left:537.6px;top:52.2px;font-size:13px;line-height:16px;color:#2b2b2b;letter-spacing:-0.087px">PivotTable</span>
<span class="t" style="left:614.9px;top:11.1px;font-size:13px;line-height:16px;color:#8a8a8a;letter-spacing:-0.105px">Data Type :</span>
<span class="t" style="left:614.9px;top:38.0px;font-size:13px;line-height:16px;color:#8a8a8a;letter-spacing:-0.001px">Format :</span>
<span class="t" style="left:649.9px;top:94.0px;font-size:13px;line-height:16px;color:#2b2b2b;letter-spacing:0.095px">Formatting</span>
<span class="t" style="left:788.9px;top:11.2px;font-size:13px;line-height:16px;color:#8a8a8a;letter-spacing:0.280px">Sort A to Z</span>
<span class="t" style="left:788.9px;top:38.1px;font-size:13px;line-height:16px;color:#8a8a8a;letter-spacing:0.208px">Sort Z to A</span>
<span class="t" style="left:788.9px;top:65.4px;font-size:13px;line-height:16px;color:#8a8a8a;letter-spacing:-0.015px">Clear Sort</span>
<span class="t" style="left:858.1px;top:52.2px;font-size:13px;line-height:16px;color:#8a8a8a;letter-spacing:-0.040px">Clear All</span>
<span class="t" style="left:864.7px;top:69.1px;font-size:13px;line-height:16px;color:#8a8a8a;letter-spacing:-0.182px">Filters</span>
<span class="t" style="left:916.7px;top:52.2px;font-size:13px;line-height:16px;color:#8a8a8a;letter-spacing:0.219px">Sort by</span>
<span class="t" style="left:911.0px;top:69.1px;font-size:13px;line-height:16px;color:#8a8a8a;letter-spacing:-0.159px">Column</span>
<span class="t" style="left:823.8px;top:94.1px;font-size:13px;line-height:16px;color:#2b2b2b;letter-spacing:0.053px">Sort and Filter</span>
<span class="t" style="left:991.8px;top:52.2px;font-size:13px;line-height:16px;color:#2b2b2b;letter-spacing:-0.466px">Find</span>
<span class="t" style="left:992.7px;top:94.0px;font-size:13px;line-height:16px;color:#2b2b2b;letter-spacing:-0.432px">Find</span>
<span class="t" style="left:1067.8px;top:10.2px;font-size:13px;line-height:16px;color:#1a1a1a;letter-spacing:-0.281px">AutoSum</span>
<span class="t" style="left:1067.8px;top:36.1px;font-size:13px;line-height:16px;color:#8a8a8a;letter-spacing:-0.388px">Create KPI</span>
<span class="t" style="left:1054.1px;top:94.0px;font-size:13px;line-height:16px;color:#2b2b2b;letter-spacing:-0.184px">Calculations</span>
<span class="t" style="left:1158.8px;top:52.2px;font-size:13px;line-height:16px;color:#2b2b2b;letter-spacing:-0.023px">Data</span>
<span class="t" style="left:1158.8px;top:69.0px;font-size:13px;line-height:16px;color:#2b2b2b;letter-spacing:-0.184px">View</span>
<span class="t" style="left:1199.8px;top:52.2px;font-size:13px;line-height:16px;color:#2b2b2b;letter-spacing:0.179px">Diagram</span>
<span class="t" style="left:1210.7px;top:69.0px;font-size:13px;line-height:16px;color:#2b2b2b;letter-spacing:-0.118px">View</span>
<span class="t" style="left:1261.7px;top:52.2px;font-size:13px;line-height:16px;color:#2b2b2b;letter-spacing:-0.277px">Show</span>
<span class="t" style="left:1255.8px;top:69.0px;font-size:13px;line-height:16px;color:#2b2b2b;letter-spacing:0.259px">Hidden</span>
<span class="t" style="left:1304.9px;top:52.2px;font-size:13px;line-height:16px;color:#2b2b2b;letter-spacing:-0.093px">Calculation</span>
<span class="t" style="left:1322.6px;top:69.0px;font-size:13px;line-height:16px;color:#2b2b2b;letter-spacing:0.010px">Area</span>
<span class="t" style="left:1245.6px;top:93.8px;font-size:13px;line-height:16px;color:#2b2b2b;letter-spacing:0.016px">View</span>
<span class="t" style="left:8.8px;top:118.0px;font-size:18px;line-height:22px;color:#000;letter-spacing:0.206px;-webkit-text-stroke:.3px #000;height:19.0px;overflow:hidden">[Sale Key]</span>
<span class="t" style="left:8.9px;top:915.7px;font-size:15px;line-height:19px;color:#262626;letter-spacing:0.217px">DimCity</span>
<span class="t" style="left:80.0px;top:915.7px;font-size:15px;line-height:19px;color:#262626;letter-spacing:-0.029px">DimCustomer</span>
<span class="t" style="left:188.4px;top:915.7px;font-size:15px;line-height:19px;color:#262626;letter-spacing:0.207px">DimDate</span>
<span class="t" style="left:265.0px;top:915.7px;font-size:15px;line-height:19px;color:#262626;letter-spacing:0.049px">DimStockItem</span>
<span class="t" style="left:375.0px;top:915.7px;font-size:15px;line-height:19px;color:#217346;letter-spacing:-0.658px;font-weight:bold">FactSale</span>
<span class="t" style="left:446.2px;top:915.7px;font-size:15px;line-height:19px;color:#262626;letter-spacing:0.053px">DimEmployee</span>
<span class="t" style="left:35.8px;top:147.6px;font-size:18px;line-height:22px;color:#fff;letter-spacing:0.365px;-webkit-text-stroke:.3px #fff">Sale Key</span>
<span class="t" style="left:150.4px;top:147.6px;font-size:18px;line-height:22px;color:#fff;letter-spacing:0.138px;-webkit-text-stroke:.3px #fff">City Key</span>
<span class="t" style="left:535.0px;top:147.6px;font-size:18px;line-height:22px;color:#fff;letter-spacing:0.337px;-webkit-text-stroke:.3px #fff">Customer...</span>
<span class="t" style="left:693.3px;top:147.6px;font-size:18px;line-height:22px;color:#fff;letter-spacing:0.472px;-webkit-text-stroke:.3px #fff">Bill To Customer Key</span>
<span class="t" style="left:982.9px;top:147.6px;font-size:18px;line-height:22px;color:#fff;letter-spacing:0.039px;-webkit-text-stroke:.3px #fff">Stock Item...</span>
<span class="t" style="left:1145.9px;top:147.6px;font-size:18px;line-height:22px;color:#fff;letter-spacing:0.328px;-webkit-text-stroke:.3px #fff">Invoice Date Key</span>
<span class="t" style="left:1459.4px;top:147.6px;font-size:18px;line-height:22px;color:#fff;letter-spacing:0.164px;-webkit-text-stroke:.3px #fff">Delivery Date...</span>
<span class="t" style="left:1647.4px;top:147.6px;font-size:18px;line-height:22px;color:#fff;letter-spacing:0.456px;-webkit-text-stroke:.3px #fff">Salesperson...</span>
<span class="t" style="left:149.6px;top:667.3px;font-size:18px;line-height:22px;color:#000;letter-spacing:0.147px;-webkit-text-stroke:.3px #000;height:19.7px;overflow:hidden">Total sales without tax: 19,918,354</span>
<span class="t" style="left:149.6px;top:709.2px;font-size:18px;line-height:22px;color:#000;letter-spacing:0.350px;-webkit-text-stroke:.3px #000;height:19.8px;overflow:hidden">Total Sales Including Tax: 22,855,078</span>
<span class="t" style="left:149.6px;top:751.0px;font-size:18px;line-height:22px;color:#000;letter-spacing:0.291px;-webkit-text-stroke:.3px #000;height:20.0px;overflow:hidden">Numbers of different customers: 49</span>
<span class="t" style="left:692.2px;top:667.3px;font-size:18px;line-height:22px;color:#000;letter-spacing:0.247px;-webkit-text-stroke:.3px #000;height:19.7px;overflow:hidden">Number of different Invoices: 8,...</span>
<span class="t" style="left:692.2px;top:709.2px;font-size:18px;line-height:22px;color:#000;letter-spacing:0.076px;-webkit-text-stroke:.3px #000;height:19.8px;overflow:hidden">Total Profit: 9,923,892</span>
<span class="t" style="left:692.2px;top:751.0px;font-size:18px;line-height:22px;color:#000;letter-spacing:0.220px;-webkit-text-stroke:.3px #000;height:20.0px;overflow:hidden">Number of different cities: 153</span>
<span class="t" style="left:1144.6px;top:667.3px;font-size:18px;line-height:22px;color:#000;letter-spacing:0.300px;-webkit-text-stroke:.3px #000;height:19.7px;overflow:hidden">Sales per Employee: 19,918,354</span>
<span class="t" style="left:1144.6px;top:709.2px;font-size:18px;line-height:22px;color:#000;letter-spacing:0.079px;-webkit-text-stroke:.3px #000;height:19.8px;overflow:hidden">total units sold: 1,028,670</span>
<span class="t" style="left:1144.6px;top:751.0px;font-size:18px;line-height:22px;color:#000;letter-spacing:0.354px;-webkit-text-stroke:.3px #000;height:20.0px;overflow:hidden">Average unit price: 44.78</span>
<span class="t" style="left:1645.6px;top:667.3px;font-size:18px;line-height:22px;color:#000;letter-spacing:0.516px;-webkit-text-stroke:.3px #000;height:19.7px;overflow:hidden">AOV: 866</span>
<span class="t" style="left:840.0px;top:874.4px;font-size:37.5px;line-height:47px;color:rgba(150,150,150,.235);letter-spacing:-0.091px;font-weight:bold">mostaql.com</span>
<svg class="a" style="left:830px;top:805px;pointer-events:none" width="260" height="90" viewBox="830 805 260 90">
<g opacity=".235" fill="none" stroke="#969696" stroke-linecap="round" stroke-linejoin="round">
<path d="M880 819.4 V867.8 H1034" stroke-width="10.6"/>
<path d="M878.6 866.4 A16.7 16.7 0 1 1 862 842.6" stroke-width="10.6"/>
<circle cx="917.2" cy="851.8" r="15.2" stroke-width="9.8"/>
<path d="M957.7 851.8 V867 M979.7 851 V867 M996.6 847.6 V867 M1012.8 844.8 V867" stroke-width="10.2"/>
<circle cx="1048.2" cy="858.6" r="16.1" stroke-width="10.4"/>
<g fill="#969696" stroke="none"><circle cx="909.3" cy="820.5" r="6.8"/><circle cx="925.7" cy="820.5" r="6.8"/><circle cx="949.7" cy="834.2" r="6.8"/><circle cx="966.2" cy="834.2" r="6.8"/></g>
</g></svg>
</body></html>
